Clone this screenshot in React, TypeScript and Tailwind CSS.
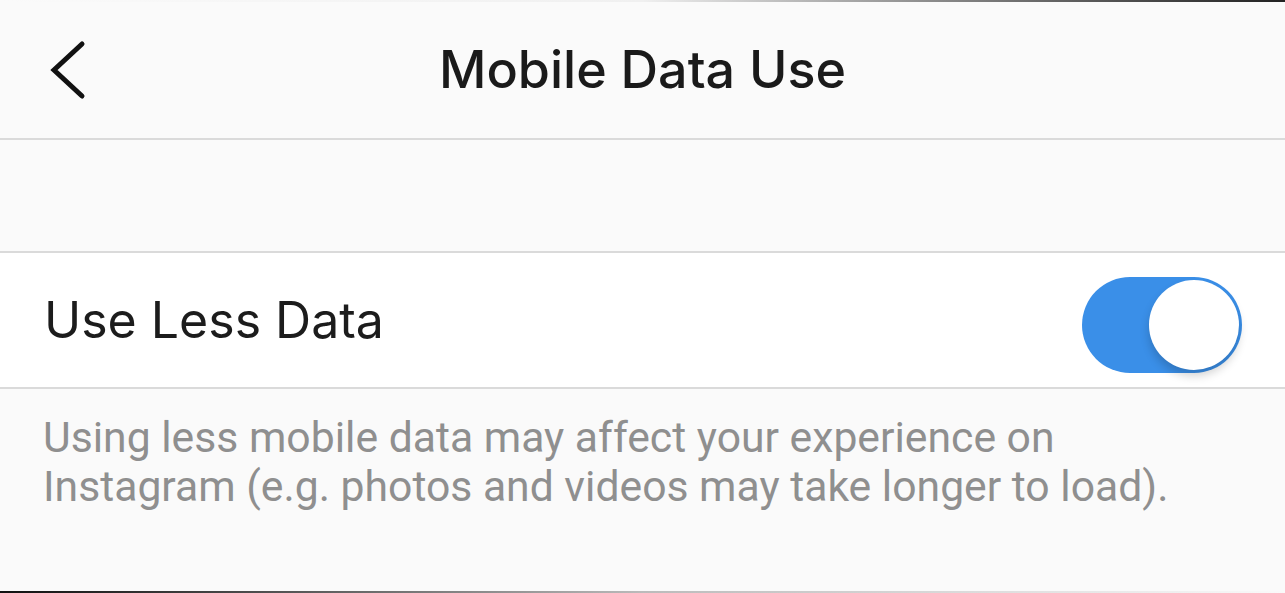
import React from 'react';

const Toggle = ({ on }: { on: boolean }) => (
  <div
    className={`relative mt-[10px] h-[96px] w-[160px] rounded-full ${on ? 'bg-[#3a8fe8]' : 'bg-gray-200'}`}
  >
    <div className="absolute right-[3px] top-[3px] h-[90px] w-[90px] rounded-full bg-white shadow-[0_6px_10px_rgba(0,0,0,0.18)]" />
  </div>
);

export default function App() {
  return (
    <div className="flex h-[593px] w-[1285px] flex-col overflow-hidden bg-[#fafafa]">
      <div className="h-[2px] w-full bg-gradient-to-r from-transparent via-[#f0f0f0] to-[#222]" />

      {/* header */}
      <div className="flex h-[138px] items-center border-b-2 border-[#dadada] font-['Inter',sans-serif]">
        <div className="flex w-[120px] justify-start pl-[50px]">
          <svg width="36" height="60" viewBox="0 0 36 60" fill="none">
            <path d="M32 4 L4 30 L32 56" stroke="#111" strokeWidth="5" strokeLinecap="round" strokeLinejoin="miter" />
          </svg>
        </div>
        <h1 className="flex-1 pr-[120px] text-center text-[52px] font-medium text-[#1a1a1a]">Mobile Data Use</h1>
      </div>

      <div className="h-[113px] border-b-2 border-[#dadada]" />

      {/* setting row */}
      <div className="flex h-[136px] items-center justify-between border-b-2 border-[#dadada] bg-white pl-[44px] pr-[43px] font-['Inter',sans-serif]">
        <span className="text-[50px] text-[#1c1c1c]">Use Less Data</span>
        <Toggle on />
      </div>

      <p className="flex-1 px-[43px] pt-[24px] font-['Roboto',sans-serif] text-[42.7px] leading-[49px] text-[#8f8f8f]">
        Using less mobile data may affect your experience on
        <br />
        Instagram (e.g. photos and videos may take longer to load).
      </p>

      <div className="h-[2px] w-full bg-gradient-to-r from-[#111] via-[#bbb] to-transparent" />
    </div>
  );
}
